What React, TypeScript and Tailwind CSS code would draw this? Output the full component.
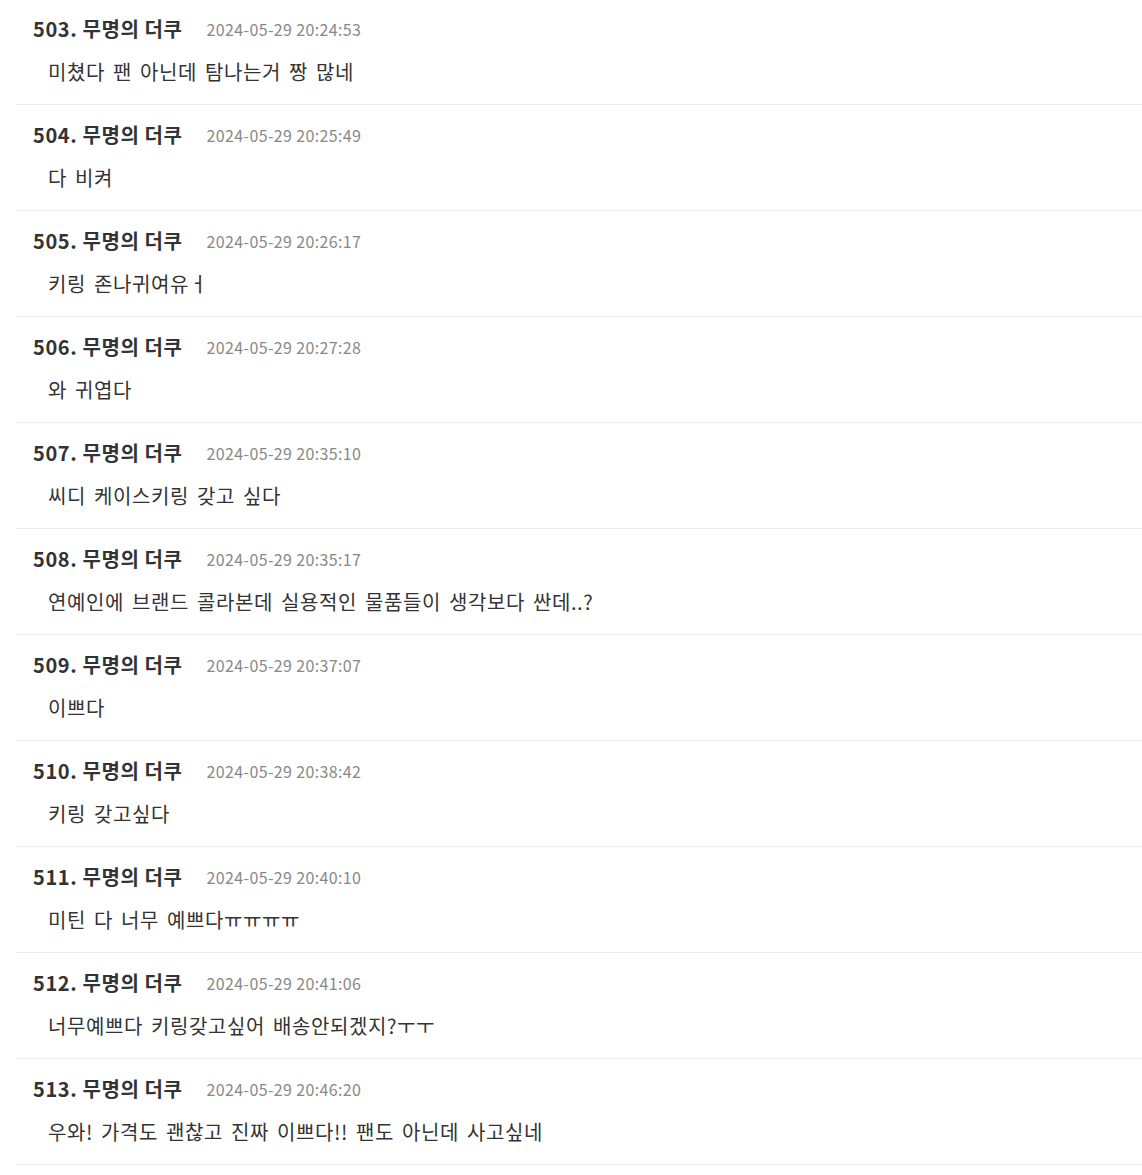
const comments = [
  { no: 503, time: "2024-05-29 20:24:53", text: "미쳤다 팬 아닌데 탐나는거 짱 많네" },
  { no: 504, time: "2024-05-29 20:25:49", text: "다 비켜" },
  { no: 505, time: "2024-05-29 20:26:17", text: "키링 존나귀여유ㅓ" },
  { no: 506, time: "2024-05-29 20:27:28", text: "와 귀엽다" },
  { no: 507, time: "2024-05-29 20:35:10", text: "씨디 케이스키링 갖고 싶다" },
  { no: 508, time: "2024-05-29 20:35:17", text: "연예인에 브랜드 콜라본데 실용적인 물품들이 생각보다 싼데..?" },
  { no: 509, time: "2024-05-29 20:37:07", text: "이쁘다" },
  { no: 510, time: "2024-05-29 20:38:42", text: "키링 갖고싶다" },
  { no: 511, time: "2024-05-29 20:40:10", text: "미틴 다 너무 예쁘다ㅠㅠㅠㅠ" },
  { no: 512, time: "2024-05-29 20:41:06", text: "너무예쁘다 키링갖고싶어 배송안되겠지?ㅜㅜ" },
  { no: 513, time: "2024-05-29 20:46:20", text: "우와! 가격도 괜찮고 진짜 이쁘다!! 팬도 아닌데 사고싶네" },
];

export default function App() {
  return (
    <div className="bg-white min-h-[1175px] overflow-hidden font-['Noto_Sans_CJK_KR',sans-serif]">
      <div className="-mt-px ml-[17px] w-[1200px]">
        {comments.map((c) => (
          <div key={c.no} className="border-b border-[#ebebeb] pl-4 pt-[18px] pb-[18px]">
            {/* Header */}
            <div className="flex items-center h-6">
              <span className="text-[20px] font-bold text-[#333] tracking-[0.6px]">
                {c.no}. 무명의 더쿠
              </span>
              <span className="ml-6 text-[16px] text-[#888] tracking-[0.35px]">{c.time}</span>
            </div>
            {/* Body */}
            <div className="mt-[17px] h-7 flex items-center pl-[15px] text-[20px] text-[#333] tracking-[0.6px] [word-spacing:2.9px]">
              {c.text}
            </div>
          </div>
        ))}
      </div>
    </div>
  );
}
